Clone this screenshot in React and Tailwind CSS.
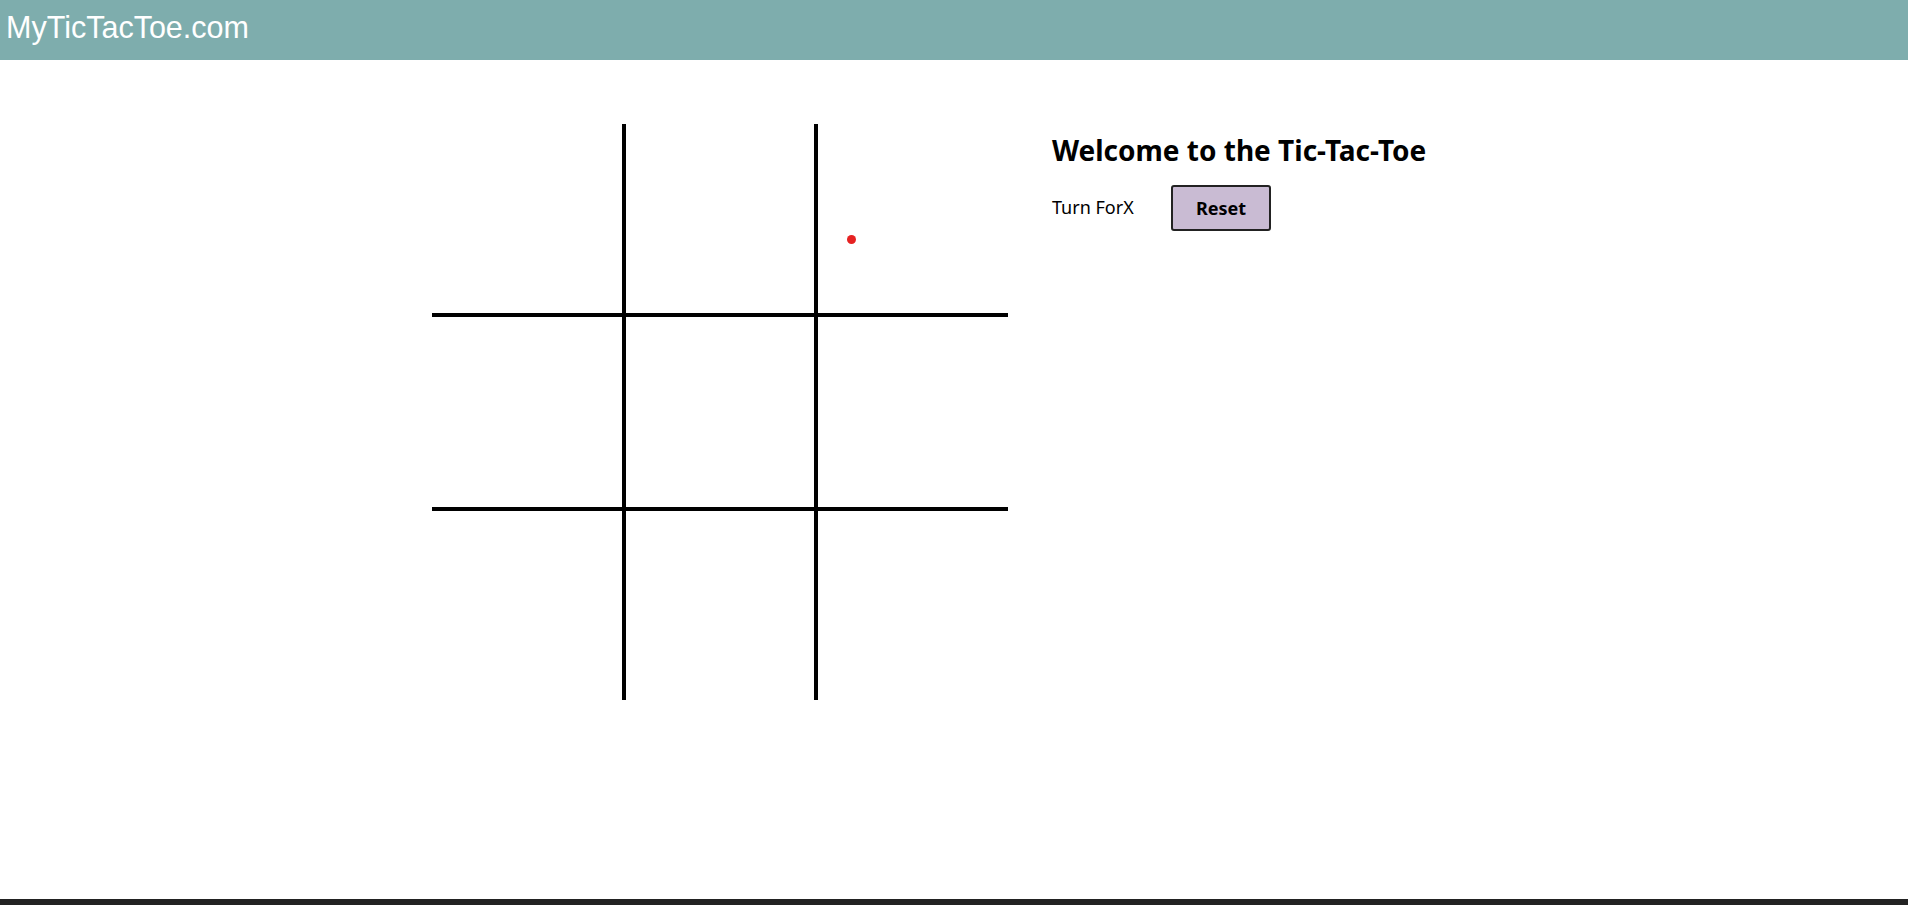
import React, { useState } from "react";

function App() {
  const [cells, setCells] = useState(Array(9).fill(null));
  const [turno, setTurno] = useState("X");

  const jugar = (i) => {
    if (cells[i]) return;
    const nuevas = [...cells];
    nuevas[i] = turno;
    setCells(nuevas);
    setTurno(turno === "X" ? "O" : "X");
  };

  const reset = () => {
    setCells(Array(9).fill(null));
    setTurno("X");
  };

  // bordes internos del tablero: 2px por lado => linea de 4px
  const bordes = [
    "border-r-2 border-b-2",
    "border-x-2 border-b-2",
    "border-l-2 border-b-2",
    "border-r-2 border-y-2",
    "border-2",
    "border-l-2 border-y-2",
    "border-r-2 border-t-2",
    "border-x-2 border-t-2",
    "border-l-2 border-t-2",
  ];

  return (
    <div className="h-screen flex flex-col bg-white relative">
      {/* HEADER */}
      <header className="h-[60px] shrink-0 bg-[#7eadad] flex items-center px-[6px]">
        <h1 className="text-white text-[30.5px] leading-none font-['Liberation_Sans',Arial,sans-serif] pb-[6px]">
          MyTicTacToe.com
        </h1>
      </header>

      {/* JUEGO */}
      <main className="flex-1 flex justify-center gap-[44px] pt-[64px]">
        <div className="grid grid-cols-3 w-[576px] h-[576px] shrink-0">
          {cells.map((c, i) => (
            <button
              key={i}
              onClick={() => jugar(i)}
              className={`${bordes[i]} border-black flex items-center justify-center text-6xl font-bold font-['Noto_Sans',sans-serif]`}
            >
              {c}
            </button>
          ))}
        </div>

        <div className="w-[424px] shrink-0 pt-[8px] font-['Noto_Sans',sans-serif] text-black">
          <h2 className="text-[28px] font-bold leading-[36px]">Welcome to the Tic-Tac-Toe</h2>
          <div className="flex items-center mt-[17px]">
            <span className="text-[18px] w-[119px] pb-[2px]">Turn For{turno}</span>
            <button
              onClick={reset}
              className="w-[100px] h-[46px] bg-[#c9bbd3] border-2 border-[#222] rounded-[3px] font-bold text-[18px]"
            >
              Reset
            </button>
          </div>
        </div>
      </main>

      {/* FOOTER */}
      <footer className="h-[6px] shrink-0 bg-[#222]"></footer>

      {/* marca del cursor */}
      <div className="absolute left-[847px] top-[235px] w-[9px] h-[9px] rounded-full bg-[#e62222]"></div>
    </div>
  );
}

export default App;
